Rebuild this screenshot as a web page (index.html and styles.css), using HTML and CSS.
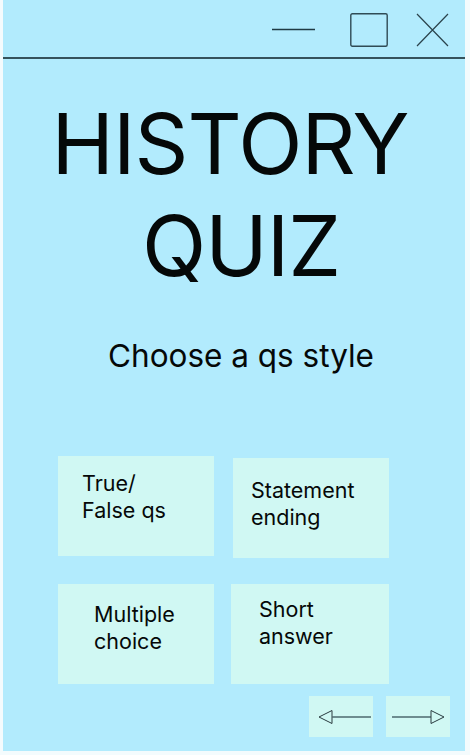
FILE: index.html
```html
<!DOCTYPE html>
<html lang="en">
<head>
<meta charset="utf-8">
<title>History Quiz</title>
<link rel="stylesheet" href="styles.css">
</head>
<body>
<div class="window">
  <header class="titlebar">
    <svg class="ctl ctl-min" width="44" height="34" viewBox="0 0 44 34"><line x1="0" y1="16.5" x2="43" y2="16.5" stroke="#1f3a44" stroke-width="1.4"/></svg>
    <svg class="ctl ctl-max" width="38" height="34" viewBox="0 0 38 34"><rect x="0.8" y="0.8" width="36.4" height="32.4" rx="1.5" fill="none" stroke="#2f4b55" stroke-width="1.4"/></svg>
    <svg class="ctl ctl-close" width="33" height="34" viewBox="0 0 33 34"><path d="M1 1 L32 33 M32 1 L1 33" stroke="#2a434c" stroke-width="1.2" fill="none"/></svg>
  </header>
  <main class="content">
    <h1 class="title"><span class="t1">HISTORY</span><span class="t2">QUIZ</span></h1>
    <p class="subtitle">Choose a qs style</p>
    <div class="grid">
      <div class="card card-a">True/<br>False qs</div>
      <div class="card card-b">Statement<br>ending</div>
      <div class="card card-c">Multiple<br>choice</div>
      <div class="card card-d">Short<br>answer</div>
    </div>
    <nav class="nav">
      <button class="navbtn navbtn-back" aria-label="Back"><svg width="54" height="16" viewBox="0 0 54 16"><path d="M1 8 L14 1.5 L14 14.5 Z" fill="none" stroke="#2a3b3f" stroke-width="1"/><line x1="14" y1="8" x2="53" y2="8" stroke="#4d6a6e" stroke-width="1.6"/></svg></button>
      <button class="navbtn" aria-label="Next"><svg width="54" height="16" viewBox="0 0 54 16"><line x1="1" y1="8" x2="40" y2="8" stroke="#4d6a6e" stroke-width="1.4"/><path d="M53 8 L40 1.5 L40 14.5 Z" fill="none" stroke="#2a3b3f" stroke-width="1"/></svg></button>
    </nav>
  </main>
</div>
</body>
</html>
```
FILE: styles.css
```css
* { box-sizing: border-box; }
html, body { margin: 0; padding: 0; background: #f4fbfd; }
body { font-family: Inter, "Noto Sans", sans-serif; color: #050808; }

.window {
  margin-left: 3px;
  width: 462px;
  height: 751px;
  background: #b2ebfd;
  display: flex;
  flex-direction: column;
}

.titlebar {
  height: 59px;
  border-bottom: 2px solid #35525c;
  display: flex;
  align-items: flex-start;
  justify-content: flex-end;
  padding-top: 13px;
  padding-right: 16px;
}
.ctl { display: block; }
.ctl-min { margin-right: 34px; }
.ctl-max { margin-right: 28px; }

.content {
  flex: 1;
  display: flex;
  flex-direction: column;
}

.title {
  margin: 34px 0 0;
  font-weight: 400;
  font-size: 84px;
  line-height: 102px;
  letter-spacing: -1px;
  display: flex;
  flex-direction: column;
  align-items: center;
}
.t1 { margin-right: 8px; }
.t2 { margin-left: 14px; }

.subtitle {
  margin: 40px 0 0;
  text-align: center;
  font-size: 31.5px;
  line-height: 38px;
  padding-left: 14px;
}

.grid {
  margin: 81px 0 0 55px;
  display: grid;
  grid-template-columns: 156px 156px;
  column-gap: 19px;
  row-gap: 26px;
  font-size: 21.5px;
  line-height: 27px;
}
.card {
  background: #d0f8f3;
  height: 100px;
}
.card-a { padding: 14px 0 0 24px; }
.card-b { margin-top: 2px; padding: 19px 0 0 18px; }
.card-c { padding: 17px 0 0 36px; }
.card-d { margin-left: -2px; padding: 12px 0 0 28px; }

.nav {
  margin: 12px 0 0 306px;
  display: flex;
  gap: 13px;
}
.navbtn {
  width: 64px;
  height: 41px;
  background: #d0f8f3;
  border: 0;
  padding: 0;
  display: flex;
  align-items: center;
  justify-content: center;
}
.navbtn-back { padding-left: 8px; }
.navbtn svg { display: block; }
```
